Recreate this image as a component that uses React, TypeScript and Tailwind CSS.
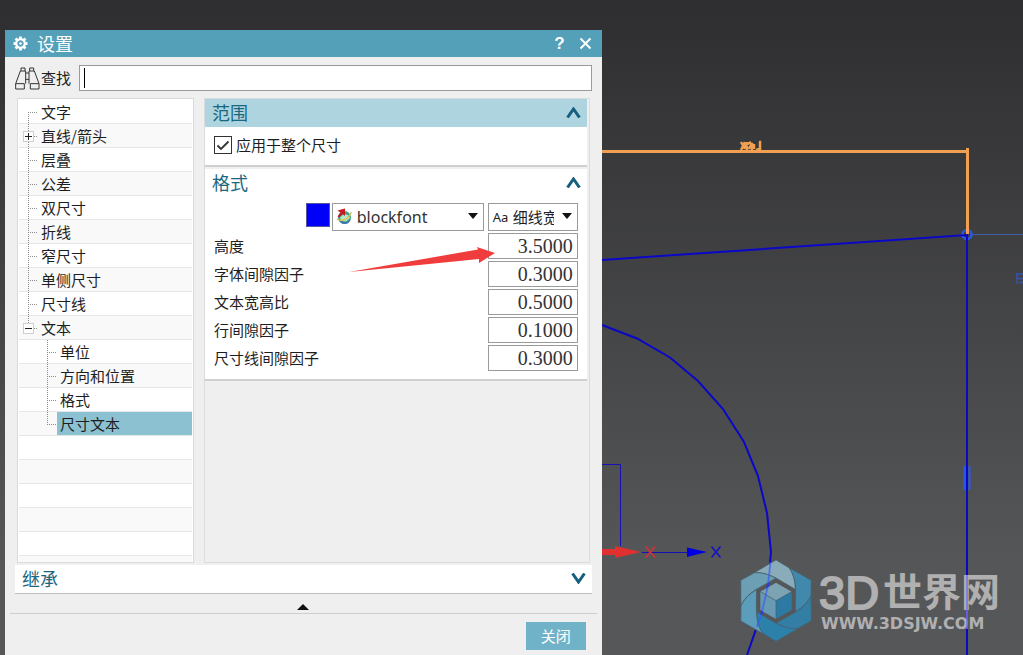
import { useState, type ReactNode } from "react";

type Toggle = "plus" | "minus";

interface TreeItem {
  label: string;
  level: 1 | 2;
  toggle?: Toggle;
  first?: boolean;
  last?: boolean;
}

const TREE: TreeItem[] = [
  { label: "文字", level: 1, first: true },
  { label: "直线/箭头", level: 1, toggle: "plus" },
  { label: "层叠", level: 1 },
  { label: "公差", level: 1 },
  { label: "双尺寸", level: 1 },
  { label: "折线", level: 1 },
  { label: "窄尺寸", level: 1 },
  { label: "单侧尺寸", level: 1 },
  { label: "尺寸线", level: 1 },
  { label: "文本", level: 1, toggle: "minus", last: true },
  { label: "单位", level: 2 },
  { label: "方向和位置", level: 2 },
  { label: "格式", level: 2 },
  { label: "尺寸文本", level: 2, last: true },
];

const BLANK_ROWS = [0, 1, 2, 3, 4];

const FIELDS = [
  { id: "height", label: "高度", value: "3.5000" },
  { id: "gap", label: "字体间隙因子", value: "0.3000" },
  { id: "aspect", label: "文本宽高比", value: "0.5000" },
  { id: "line-gap", label: "行间隙因子", value: "0.1000" },
  { id: "dim-gap", label: "尺寸线间隙因子", value: "0.3000" },
];

function Chevron({ down = false }: { down?: boolean }) {
  return (
    <svg width="15" height="11" viewBox="0 0 15 11" fill="none" stroke="#175f80" strokeWidth="3">
      <path d={down ? "M1.5 0.5 7.5 9 13.5 0.5" : "M1.5 10.5 7.5 2 13.5 10.5"} />
    </svg>
  );
}

function Gear() {
  return (
    <svg width="15" height="15" viewBox="-7.5 -7.5 15 15" fill="none" stroke="#fff">
      <circle r="4.3" strokeWidth="2.2" />
      {[0, 45, 90, 135, 180, 225, 270, 315].map((a) => (
        <path key={a} d="M0-4.6V-7" strokeWidth="2.8" transform={`rotate(${a})`} />
      ))}
      <circle r="1.3" fill="#fff" stroke="none" />
    </svg>
  );
}

function Binoculars() {
  return (
    <svg width="25" height="23" viewBox="44 137 75 69" fill="none" stroke="#333" strokeWidth="3">
      <path d="M62 149V140H74V149M60 149H76V187M60 149 46 187V203H72V187M46 187H72" />
      <path d="M100 149V140H88V149M102 149H86V187M102 149 116 187V203H90V187M116 187H90" />
      <path d="M76 155H86M76 174H86" />
    </svg>
  );
}

function FontGlobe() {
  return (
    <svg width="17" height="17" viewBox="0 0 17 17">
      <circle cx="8.500" cy="9.500" r="6.500" fill="#3a9f8c" />
      <path d="M2.500 11c3 4 9 4 12 0-1 4-3 5-6 5S3.500 14 2.500 11z" fill="#3f78b5" />
      <path d="M4 9.500 8 6l4 1 2 3-4 3.500-5-1z" fill="#b5e8c4" />
      <path d="M1 11c4 3 11 1 14.500-7" fill="none" stroke="#e2c04a" strokeWidth="1.300" />
      <path d="M1.500 2.500 9 0.500V8L6.500 6 3 9.500 1.500 8.500 4.500 4.500z" fill="#c81822" />
    </svg>
  );
}

function Caret() {
  return (
    <svg width="10" height="6" viewBox="0 0 10 6" className="pointer-events-none absolute right-[6px] top-[10px]">
      <path d="M0 0H10L5 6z" fill="#111" />
    </svg>
  );
}

function Guide({ item }: { item: TreeItem }) {
  const w = item.level * 19;
  const x = w - 9.5;
  const top = item.first ? 12 : 0;
  const bottom = item.last ? 12 : 24;
  return (
    <svg width={w} height="24" viewBox={`0 0 ${w} 24`} fill="none" className="block">
      <path d={`M${x} ${top}V${bottom}`} stroke="#8c8c8c" strokeDasharray="1 1" />
      <path d={`M${x - 0.5} 12.500H${w - 1}`} stroke="#8c8c8c" strokeDasharray="1 1" />
      {item.toggle && (
        <>
          <rect x={x - 5} y="7.5" width="10" height="10" fill="#fff" stroke="#cfcfcf" />
          <path
            d={item.toggle === "plus" ? `M${x - 3.5} 12.500h7M${x} 9v7` : `M${x - 3.5} 12.500h7`}
            stroke="#222"
          />
        </>
      )}
    </svg>
  );
}

function Tree() {
  const [selected, setSelected] = useState("尺寸文本");
  return (
    <div className="w-[177px] shrink-0 border border-[#dadada] bg-white p-px pb-0">
      <ul>
        {TREE.map((item) => (
          <li key={item.label} className="flex h-6 border-b border-[#e6e6e6] even:bg-[#f9f9f9]">
            {item.toggle ? (
              <button type="button" aria-label={item.toggle === "plus" ? "展开" : "折叠"} className="h-6 shrink-0">
                <Guide item={item} />
              </button>
            ) : (
              <span className="h-6 shrink-0">
                <Guide item={item} />
              </span>
            )}
            <button
              type="button"
              onClick={() => setSelected(item.label)}
              className={
                "flex-1 pl-[3px] text-left text-[15px] leading-6 " + (selected === item.label ? "bg-[#8cc1d1]" : "")
              }
            >
              {item.label}
            </button>
          </li>
        ))}
        {BLANK_ROWS.map((n) => (
          <li key={n} className="h-6 border-b border-[#e6e6e6] even:bg-[#f9f9f9]" />
        ))}
        <li className="h-[6px] bg-[#f9f9f9]" />
      </ul>
    </div>
  );
}

function Section({ title, active = false, children }: { title: string; active?: boolean; children: ReactNode }) {
  return (
    <section className="border-b-2 border-[#cfcfcf] bg-white">
      <h2>
        <button
          type="button"
          className={
            "flex h-7 w-full items-center justify-between pb-[2px] pl-[7px] pr-[6px] text-[18px] leading-[26px] text-[#1a6880] " +
            (active ? "bg-[#aed5df]" : "bg-white")
          }
        >
          {title}
          <Chevron />
        </button>
      </h2>
      {children}
    </section>
  );
}

function Panel() {
  const [whole, setWhole] = useState(true);
  return (
    <div className="flex min-w-0 flex-1 flex-col gap-[2px] border border-[#d8dcde] pr-[2px]">
      <Section title="范围" active>
        <label className="flex h-[38px] items-center gap-1 pb-[2px] pl-[9px] text-[15px]">
          <span className="relative h-[18px] w-[18px]">
            <input
              type="checkbox"
              checked={whole}
              onChange={(e) => setWhole(e.target.checked)}
              className="block h-[18px] w-[18px] appearance-none border border-[#333] bg-white"
            />
            {whole && (
              <svg
                width="18"
                height="18"
                viewBox="0 0 18 18"
                fill="none"
                stroke="#333"
                strokeWidth="1.8"
                className="pointer-events-none absolute inset-0"
              >
                <path d="M3.500 9.500 7 13 14.500 5.500" />
              </svg>
            )}
          </span>
          应用于整个尺寸
        </label>
      </Section>
      <Section title="格式">
        <div className="flex flex-col gap-[2px] pb-2 pl-[9px] pr-[9px] pt-[6px]">
          <div className="flex items-start justify-end">
            <button type="button" aria-label="颜色" className="mr-[2px] h-6 w-6 border border-[#5555a0] bg-[#0000fa]" />
            <div className="relative mr-1">
              <select
                aria-label="字体"
                className="block h-7 w-[152px] appearance-none border border-[#9a9a9a] bg-white pl-6 font-['Noto_Sans',sans-serif] text-[16px] text-[#333]"
              >
                <option>blockfont</option>
              </select>
              <span className="pointer-events-none absolute left-[4px] top-[5px]">
                <FontGlobe />
              </span>
              <Caret />
            </div>
            <div className="relative">
              <select
                aria-label="线宽"
                className="block h-7 w-[90px] appearance-none overflow-hidden border border-[#9a9a9a] bg-white pl-6 pr-[23px] text-[15px]"
              >
                <option>细线宽</option>
              </select>
              <span className="pointer-events-none absolute left-[5px] top-0 font-['Noto_Sans',sans-serif] text-[13px] leading-7">
                Aa
              </span>
              <Caret />
            </div>
          </div>
          {FIELDS.map((f) => (
            <div key={f.id} className="flex h-[26px] items-center justify-between">
              <label htmlFor={f.id} className="text-[15px]">
                {f.label}
              </label>
              <input
                id={f.id}
                defaultValue={f.value}
                className="h-[26px] w-[90px] border border-[#9a9a9a] bg-white pr-1 text-right font-['Liberation_Serif',serif] text-[20px] leading-6 text-[#333]"
              />
            </div>
          ))}
        </div>
      </Section>
    </div>
  );
}

const PETALS = [
  { angle: 0, fill: "#8aabb9" },
  { angle: 60, fill: "#4189ac" },
  { angle: 120, fill: "#337ea5" },
  { angle: 180, fill: "#2c81ab" },
  { angle: 240, fill: "#5b9dba" },
  { angle: 300, fill: "#6c9fb4" },
];

function SiteLogo() {
  return (
    <g>
      <g transform="translate(720 540) scale(0.33333)">
        {PETALS.map((p) => (
          <path
            key={p.angle}
            d="M103 98 168 60 208 84Q226 110 226 148L168 114Q135 96 103 98z"
            fill={p.fill}
            stroke="#47606c"
            strokeWidth="2"
            transform={`rotate(${p.angle} 168 182)`}
          />
        ))}
        <path d="M168 128 215 155 168 182 121 155z" fill="#7ba3b3" />
        <path d="M121 155 168 182V237L121 210z" fill="#689bb3" />
        <path d="M215 155 168 182V237L215 210z" fill="#2c7aa3" />
        <path d="M121 155 168 182 215 155M168 182V237" stroke="#47606c" strokeWidth="2" fill="none" />
      </g>
      <g fill="#b0b0b1">
        <text
          x="819"
          y="609"
          fontSize="47"
          fontFamily="Liberation Sans, sans-serif"
          stroke="#b0b0b1"
          strokeWidth="2"
        >
          3D
        </text>
        <text x="883" y="606" fontSize="39" fontWeight="700" fontFamily="Noto Sans CJK SC, sans-serif">
          世界网
        </text>
        <text x="821" y="629" fontSize="16" fontWeight="700" fontFamily="DejaVu Sans, sans-serif">
          WWW.3DSJW.COM
        </text>
      </g>
      <path d="M770.500 562 768 585 762 612 757 627" stroke="#3a5cf0" strokeWidth="2" opacity="0.65" />
      <path d="M967 575V629" stroke="#7a74e8" strokeWidth="2" opacity="0.8" />
    </g>
  );
}

function Drawing() {
  return (
    <svg
      viewBox="0 0 1023 655"
      preserveAspectRatio="xMinYMin slice"
      fill="none"
      className="absolute inset-0 h-full w-full"
    >
      <path d="M970 234.500H1023" stroke="#3c5ea6" />
      <path d="M1023 274H1016M1017 278.500H1023M1017 274V284M1019 282.500H1023" stroke="#3554b8" strokeWidth="1.300" />
      <circle cx="967" cy="234.500" r="4.500" stroke="#2a58e6" strokeWidth="2.500" />
      <path d="M964.500 466V490M969.500 466V490" stroke="#2a5be8" strokeWidth="2" />
      <g stroke="#0b07c8" strokeWidth="2">
        <path d="M602 260 967 235V655" />
        <path d="M602 325 637 338.500 670 357.500 698 381 723 409 744 442 758 476 767 513 771 552 768 585 762 612 747 655" />
      </g>
      <path d="M602 464.500H620.500V546M642 552.500H688" stroke="#1510b4" />
      <path d="M687 547.500 707 552 687 557z" fill="#0000e0" />
      <path d="M711.500 546.500 720.500 557.500M720.500 546.500 711.500 557.500" stroke="#1010c8" strokeWidth="1.500" />
      <path d="M602 549H615V546L641 552 615 558V555H602z" fill="#e03030" />
      <path d="M645.500 546.500 655 557.500M655 546.500 645.500 557.500" stroke="#d83038" strokeWidth="1.500" />
      <g stroke="#f0a050">
        <path d="M602 151.500H969M967.500 148V234" strokeWidth="3" />
        <path
          d="M741 142 745 149M745 142 741 150M744 143 748 149M747 142V150M746 145 751 142M749 149 752 143V150M754 144V149M759 142H760V149L756 150"
          strokeWidth="2.500"
        />
      </g>
      <SiteLogo />
    </svg>
  );
}

export default function App() {
  return (
    <main className="relative flex min-h-screen items-start overflow-hidden bg-[linear-gradient(#2e2e30,#555658_85%,#565759)] pt-[30px] font-['Noto_Sans_CJK_SC',sans-serif] text-[#1e1e1e]">
      <Drawing />
      <div
        role="dialog"
        aria-label="设置"
        className="relative ml-[5px] w-7/12 min-w-[560px] shrink-0 bg-[#efefef]"
      >
        <header className="flex h-[27px] items-center bg-[#54a0b8] pl-2 pr-[10px] text-white">
          <Gear />
          <h1 className="ml-[9px] flex-1 text-[18px] leading-[27px]">设置</h1>
          <button
            type="button"
            aria-label="帮助"
            className="mr-[14px] font-['Liberation_Sans',sans-serif] text-[17px] font-bold leading-[27px]"
          >
            ?
          </button>
          <button type="button" aria-label="关闭窗口">
            <svg width="13" height="13" viewBox="0 0 13 13" stroke="#fff" strokeWidth="2">
              <path d="M1.500 1.500 11.500 11.500M11.500 1.500 1.500 11.500" />
            </svg>
          </button>
        </header>

        <div className="flex items-center px-[10px] pt-2">
          <Binoculars />
          <label htmlFor="search" className="ml-px text-[15px] leading-[26px]">
            查找
          </label>
          <div className="relative ml-2 flex-1">
            <input id="search" className="block h-[26px] w-full border border-[#9a9a9a] bg-white px-1 text-[15px]" />
            <span className="pointer-events-none absolute left-[5px] top-[3px] h-5 w-px bg-black" />
          </div>
        </div>

        <div className="flex gap-[10px] px-3 pt-[7px]">
          <Tree />
          <Panel />
        </div>

        <section className="mx-[10px] mt-[2px] border-b border-[#bdbdbd] bg-white">
          <h2>
            <button
              type="button"
              className="flex h-7 w-full items-center justify-between pb-[2px] pl-[7px] pr-[6px] text-[18px] leading-[26px] text-[#1a6880]"
            >
              继承
              <Chevron down />
            </button>
          </h2>
        </section>

        <button type="button" aria-label="收起" className="flex h-[19px] w-full items-end justify-center pb-[3px]">
          <svg width="12" height="6" viewBox="0 0 12 6">
            <path d="M0 6H12L6 0z" fill="#111" />
          </svg>
        </button>
        <div className="mx-[5px] h-px bg-[#cecece]" />
        <footer className="flex justify-end pb-[5px] pr-4 pt-2">
          <button type="button" className="h-7 w-[60px] bg-[#70b3c8] text-[15px] leading-7 text-white">
            关闭
          </button>
        </footer>
      </div>

      <svg
        width="150"
        height="30"
        viewBox="347 245 150 30"
        className="pointer-events-none absolute left-[347px] top-[245px]"
      >
        <path d="M349 272 478 249.500 477 247 495 253 479 263 479 259z" fill="#f03c3c" />
      </svg>
    </main>
  );
}
